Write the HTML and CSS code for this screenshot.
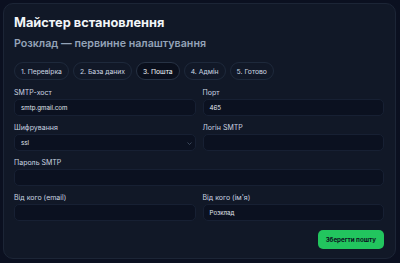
FILE: index.html
```html
<!DOCTYPE html>
<html>
  <head>
    <meta charset="utf-8">
    <title>Майстер встановлення</title>
    <link rel="stylesheet" href="styles.css">
  </head>
  <body>
    <div class="wizard">
      <h1 class="title">Майстер встановлення</h1>
      <h2 class="subtitle">Розклад — первинне налаштування</h2>

      <div class="steps">
        <span class="step">1. Перевірка</span>
        <span class="step">2. База даних</span>
        <span class="step active">3. Пошта</span>
        <span class="step">4. Адмін</span>
        <span class="step">5. Готово</span>
      </div>

      <div class="form-grid">
        <div class="field">
          <label>SMTP-хост</label>
          <div class="input">smtp.gmail.com</div>
        </div>
        <div class="field">
          <label>Порт</label>
          <div class="input">465</div>
        </div>
        <div class="field">
          <label>Шифрування</label>
          <div class="input select">
            ssl
            <svg class="chevron" width="5" height="3" viewBox="0 0 5 3"><path d="M0.5 0.5 L2.5 2.5 L4.5 0.5" fill="none" stroke="#475569" stroke-width="0.8"/></svg>
          </div>
        </div>
        <div class="field">
          <label>Логін SMTP</label>
          <div class="input"></div>
        </div>
        <div class="field wide">
          <label>Пароль SMTP</label>
          <div class="input"></div>
        </div>
        <div class="field">
          <label>Від кого (email)</label>
          <div class="input"></div>
        </div>
        <div class="field">
          <label>Від кого (ім'я)</label>
          <div class="input">Розклад</div>
        </div>
      </div>

      <div class="actions">
        <button class="save">Зберегти пошту</button>
      </div>
    </div>
  </body>
</html>
```

FILE: styles.css
```css
html, body {
  margin: 0;
  background-color: #0b1020;
}

body {
  padding: 3px 4px 4px 3px;
  font-family: Inter, "Noto Sans", sans-serif;
}

.wizard {
  background-color: #111827;
  border: 1px solid #1c2536;
  border-radius: 10px;
  padding: 9px 11px 9px 10px;
}

.title {
  margin: 0;
  font-size: 12.8px;
  line-height: 20px;
  font-weight: 700;
  color: #f1f5f9;
}

.subtitle {
  margin: 2px 0 0;
  font-size: 10.7px;
  line-height: 18px;
  font-weight: 600;
  color: #94a3b8;
}

.steps {
  display: flex;
  gap: 4px;
  margin-top: 9px;
}

.step {
  display: flex;
  align-items: center;
  height: 16px;
  padding: 0 6px;
  border: 1px solid #1e293b;
  border-radius: 999px;
  font-size: 6.8px;
  color: #cbd5e1;
}

.step.active {
  background-color: #0a0f1c;
  border-color: #273244;
  color: #f1f5f9;
}

.form-grid {
  display: grid;
  grid-template-columns: 1fr 1fr;
  column-gap: 7px;
  row-gap: 7px;
  margin-top: 8px;
}

.field.wide {
  grid-column: 1 / 3;
}

.field label {
  display: block;
  font-size: 7px;
  line-height: 10px;
  color: #cbd5e1;
  margin-bottom: 1px;
}

.input {
  position: relative;
  height: 17px;
  box-sizing: border-box;
  padding: 0 6px;
  display: flex;
  align-items: center;
  background-color: #0b1120;
  border: 1px solid #172033;
  border-radius: 5px;
  font-size: 6.2px;
  color: #e2e8f0;
}

.chevron {
  position: absolute;
  right: 3px;
  top: 7px;
}

.actions {
  display: flex;
  justify-content: flex-end;
  margin-top: 9px;
}

.save {
  height: 19px;
  padding: 0 8px;
  background-color: #22c55e;
  color: #0b1120;
  border: none;
  border-radius: 5px;
  font-family: Inter, "Noto Sans", sans-serif;
  font-size: 6.2px;
  font-weight: 700;
}
```
